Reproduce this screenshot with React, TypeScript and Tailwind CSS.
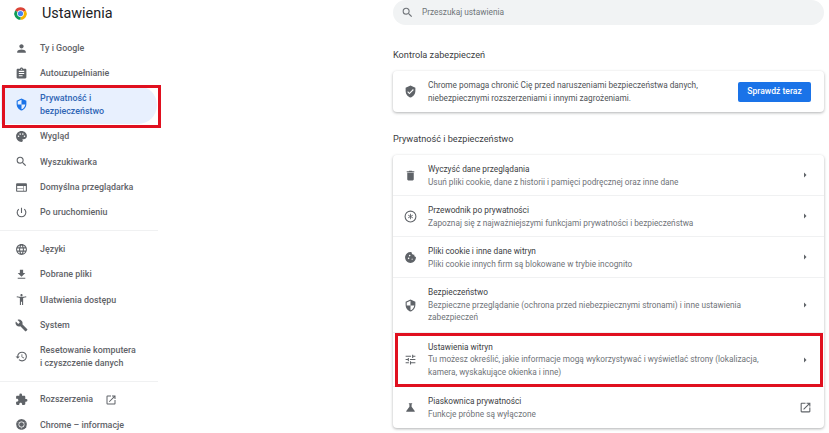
import type { ReactNode } from "react";
import {
  MdPerson,
  MdAssignment,
  MdSecurity,
  MdPalette,
  MdSearch,
  MdWeb,
  MdPowerSettingsNew,
  MdLanguage,
  MdFileDownload,
  MdAccessibilityNew,
  MdBuild,
  MdRestore,
  MdExtension,
  MdOpenInNew,
  MdDelete,
  MdCookie,
  MdTune,
  MdScience,
  MdArrowRight,
  MdVerifiedUser,
} from "react-icons/md";

function ChromeLogo({ size = 15, gray = false }: { size?: number; gray?: boolean }) {
  const red = gray ? "#5f6368" : "#db4437";
  const yellow = gray ? "#5f6368" : "#f4b400";
  const green = gray ? "#5f6368" : "#0f9d58";
  const inner = gray ? "#5f6368" : "#4285f4";
  return (
    <svg width={size} height={size} viewBox="0 0 24 24">
      <path d="M12 12 L3.3 7 A10 10 0 0 1 20.7 7 Z" fill={red} />
      <path d="M12 12 L20.7 7 A10 10 0 0 1 12 22 Z" fill={yellow} />
      <path d="M12 12 L12 22 A10 10 0 0 1 3.3 7 Z" fill={green} />
      <circle cx="12" cy="12" r="5.4" fill="#fff" />
      <circle cx="12" cy="12" r="4.2" fill={inner} />
    </svg>
  );
}

function SideItem({ icon, label, h = "h-[25.4px]" }: { icon: ReactNode; label: ReactNode; h?: string }) {
  return (
    <div className={`flex items-center ${h} text-[#5f6368]`}>
      <div className="w-[40px] flex justify-center pl-[2px] shrink-0 text-[13px]">{icon}</div>
      <div className="text-[8.9px] leading-[12.6px] font-medium">{label}</div>
    </div>
  );
}

function Row({
  icon,
  title,
  sub,
  end,
  h,
  last,
  shift,
}: {
  icon: ReactNode;
  title: string;
  sub: ReactNode;
  end?: ReactNode;
  h: string;
  last?: boolean;
  shift?: boolean;
}) {
  return (
    <div className={`flex items-center ${h} ${last ? "" : "border-b border-[#f0f1f2]"}`}>
      <div className="w-[35px] flex justify-center shrink-0 text-[13px] text-[#5f6368]">{icon}</div>
      <div className={`flex-1 min-w-0 ${shift ? "pt-[2px]" : ""}`}>
        <div className="text-[8.27px] leading-[12.6px] text-[#3c4043]">{title}</div>
        <div className="text-[8.27px] leading-[12.6px] text-[#6f7378]">{sub}</div>
      </div>
      <div className="w-[38px] flex justify-center shrink-0 text-[#5f6368]">
        {end ?? <MdArrowRight className="text-[12px]" />}
      </div>
    </div>
  );
}

export default function App() {
  return (
    <div className="relative flex h-[433px] w-[829px] overflow-hidden bg-white font-['Roboto',sans-serif]">
      {/* Sidebar */}
      <div className="w-[158px] shrink-0">
        <div className="flex items-center h-[27px] pl-[13px]">
          <ChromeLogo size={15} />
          <div className="ml-[14px] text-[14.4px] text-[#202124]">Ustawienia</div>
        </div>
        <div className="pt-[8.4px]">
          <SideItem icon={<MdPerson />} label="Ty i Google" />
          <SideItem icon={<MdAssignment />} label="Autouzupełnianie" />
          <div className="flex items-center h-[37.6px] w-[156px] ml-[1px] rounded-r-[19px] bg-[#e8f0fe] text-[#1a73e8]">
            <div className="w-[39px] flex justify-center pl-[2px] shrink-0 text-[13px]">
              <MdSecurity />
            </div>
            <div className="text-[8.9px] leading-[12.6px] font-medium text-[#2f65b5]">
              Prywatność i
              <br />
              bezpieczeństwo
            </div>
          </div>
          <SideItem icon={<MdPalette />} label="Wygląd" />
          <SideItem icon={<MdSearch />} label="Wyszukiwarka" />
          <SideItem icon={<MdWeb />} label="Domyślna przeglądarka" />
          <SideItem icon={<MdPowerSettingsNew />} label="Po uruchomieniu" />
          <div className="my-[5px] border-t border-[#f0f1f2]" />
          <SideItem icon={<MdLanguage />} label="Języki" />
          <SideItem icon={<MdFileDownload />} label="Pobrane pliki" />
          <SideItem icon={<MdAccessibilityNew />} label="Ułatwienia dostępu" />
          <SideItem icon={<MdBuild />} label="System" />
          <SideItem
            h="h-[38px]"
            icon={<MdRestore />}
            label={
              <>
                Resetowanie komputera
                <br />i czyszczenie danych
              </>
            }
          />
          <div className="my-[5px] border-t border-[#f0f1f2]" />
          <SideItem
            icon={<MdExtension />}
            label={
              <span className="flex items-center gap-[12px]">
                Rozszerzenia <MdOpenInNew className="text-[12px]" />
              </span>
            }
          />
          <SideItem icon={<ChromeLogo size={13} gray />} label="Chrome – informacje" />
        </div>
      </div>

      {/* Main */}
      <div className="ml-[235px] w-[431px] shrink-0">
        <div className="flex items-center h-[25px] rounded-full bg-[#f1f3f4] text-[#6f7378]">
          <MdSearch className="ml-[8px] text-[13px]" />
          <span className="ml-[8px] text-[8.3px]">Przeszukaj ustawienia</span>
        </div>

        <div className="mt-[23px] h-[14px] leading-[14px] text-[9.17px] text-[#3c4043]">Kontrola zabezpieczeń</div>
        <div className="mt-[9px] flex items-center h-[41px] rounded-[4px] bg-white shadow-[0_1px_3px_rgba(60,64,67,0.4)]">
          <div className="w-[35px] flex justify-center shrink-0 text-[13px] text-[#5f6368]">
            <MdVerifiedUser />
          </div>
          <div className="flex-1 text-[8.27px] leading-[12.6px] text-[#4f5357]">
            Chrome pomaga chronić Cię przed naruszeniami bezpieczeństwa danych,
            <br />
            niebezpiecznymi rozszerzeniami i innymi zagrożeniami.
          </div>
          <button className="mr-[13px] h-[20px] w-[73px] rounded-[2px] bg-[#1a73e8] text-[8.6px] font-medium text-white">
            Sprawdź teraz
          </button>
        </div>

        <div className="mt-[20px] h-[14px] leading-[14px] text-[9.17px] text-[#3c4043]">Prywatność i bezpieczeństwo</div>
        <div className="mt-[9px] rounded-[4px] bg-white shadow-[0_1px_3px_rgba(60,64,67,0.4)]">
          <Row
            h="h-[41px]"
            shift
            icon={<MdDelete />}
            title="Wyczyść dane przeglądania"
            sub="Usuń pliki cookie, dane z historii i pamięci podręcznej oraz inne dane"
          />
          <Row
            h="h-[41px]"
            shift
            icon={
              <svg width="13" height="13" viewBox="0 0 24 24" fill="none" stroke="currentColor" strokeWidth="2">
                <circle cx="12" cy="12" r="10" />
                <path d="M12 7v10M7.7 9.5l8.6 5M16.3 9.5l-8.6 5" strokeWidth="1.6" />
              </svg>
            }
            title="Przewodnik po prywatności"
            sub="Zapoznaj się z najważniejszymi funkcjami prywatności i bezpieczeństwa"
          />
          <Row
            h="h-[41px]"
            shift
            icon={<MdCookie />}
            title="Pliki cookie i inne dane witryn"
            sub="Pliki cookie innych firm są blokowane w trybie incognito"
          />
          <Row
            h="h-[55px]"
            icon={<MdSecurity />}
            title="Bezpieczeństwo"
            sub={
              <>
                Bezpieczne przeglądanie (ochrona przed niebezpiecznymi stronami) i inne ustawienia
                <br />
                zabezpieczeń
              </>
            }
          />
          <Row
            h="h-[54px]"
            icon={<MdTune />}
            title="Ustawienia witryn"
            sub={
              <>
                Tu możesz określić, jakie informacje mogą wykorzystywać i wyświetlać strony (lokalizacja,
                <br />
                kamera, wyskakujące okienka i inne)
              </>
            }
          />
          <Row
            h="h-[41px]"
            last
            icon={<MdScience />}
            title="Piaskownica prywatności"
            sub="Funkcje próbne są wyłączone"
            end={<MdOpenInNew className="text-[13px]" />}
          />
        </div>
      </div>

      {/* red highlight boxes added over the screenshot */}
      <div className="absolute left-[2px] top-[85px] h-[43px] w-[159px] border-[3px] border-[#e0101f]" />
      <div className="absolute left-[395px] top-[333px] h-[54px] w-[428px] border-[3px] border-[#e0101f]" />
    </div>
  );
}
